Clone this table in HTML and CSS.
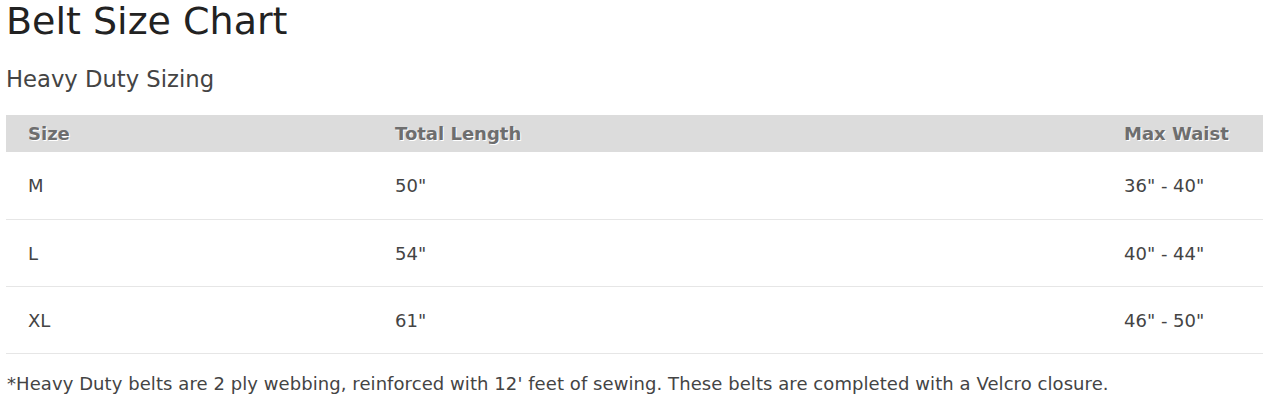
FILE: index.html
```html
<!DOCTYPE html>
<html>
<head>
<meta charset="utf-8">
<link rel="stylesheet" href="styles.css">
</head>
<body>
<div class="page">
  <h1 class="title">Belt Size Chart</h1>
  <h2 class="subtitle">Heavy Duty Sizing</h2>
  <table class="chart">
    <thead>
      <tr><th class="c1">Size</th><th class="c2">Total Length</th><th class="c3">Max Waist</th></tr>
    </thead>
    <tbody>
      <tr><td>M</td><td>50"</td><td>36" - 40"</td></tr>
      <tr><td>L</td><td>54"</td><td>40" - 44"</td></tr>
      <tr><td>XL</td><td>61"</td><td>46" - 50"</td></tr>
    </tbody>
  </table>
  <p class="note">*Heavy Duty belts are 2 ply webbing, reinforced with 12' feet of sewing. These belts are completed with a Velcro closure.</p>
</div>
</body>
</html>
```
FILE: styles.css
```css
html, body { margin: 0; padding: 0; background: #fff; }
body { font-family: "DejaVu Sans", Verdana, sans-serif; color: #444; }
.page { padding: 0 7px 0 6px; }
.title { margin: 0; font-size: 38px; font-weight: normal; color: #222; line-height: 42px; }
.subtitle { margin: 22px 0 0 0; font-size: 22.7px; font-weight: normal; color: #444; line-height: 30px; }
.chart { width: 100%; border-collapse: collapse; margin-top: 21px; table-layout: fixed; }
.chart th { background: #dcdcdc; color: #6e6e6e; text-shadow: 1px 1px 0 #fff; font-size: 18px; font-weight: bold; text-align: left; height: 37px; padding: 0 0 0 22px; }
.chart th.c1 { width: 345px; }
.chart th.c2 { width: 707px; }
.chart th.c3 { width: 139px; }
.chart td { font-size: 18px; color: #444; height: 66px; padding: 0 0 0 22px; border-bottom: 1px solid #e6e6e6; }
.chart tbody tr:first-child td { height: 67px; }
.note { margin: 19px 0 0 1px; font-size: 18px; letter-spacing: 0.07px; color: #444; }
```
